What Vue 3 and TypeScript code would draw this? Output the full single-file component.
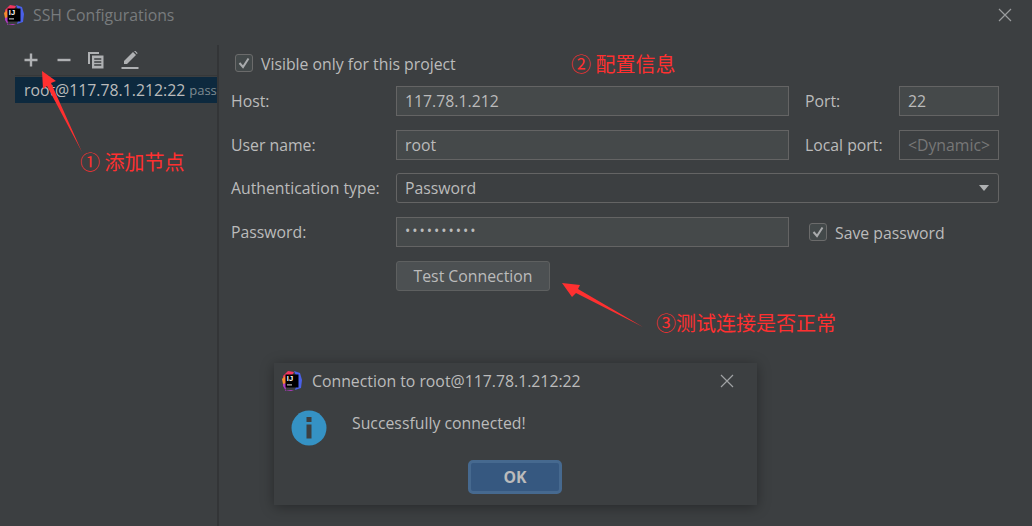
<template>
  <div class="window">
    <header class="titlebar">
      <svg class="logo" width="20" height="20" viewBox="0 0 20 20">
        <polygon points="1,5 6,0 12,1 8,8 2,14" fill="#f0365f" />
        <polygon points="12,0 18,2 20,9 19,17 13,19 16,9" fill="#4a60e8" />
        <polygon points="1,8 5,14 3,20 9,19 12,20 4,20 1,15" fill="#b03bc0" />
        <polygon points="0,8 3,5 4,12 1,13" fill="#f58b2e" />
        <rect x="3.5" y="3.5" width="13" height="13" fill="#000" />
        <text x="4.8" y="10.4" class="logo-text">IJ</text>
        <rect x="5" y="13.4" width="5" height="1" fill="#ddd" />
      </svg>
      <span class="title">SSH Configurations</span>
      <svg class="close" width="14" height="14" viewBox="0 0 14 14">
        <path d="M1 1 L13 13 M13 1 L1 13" stroke="#9a9c9e" stroke-width="1.2" fill="none" />
      </svg>
    </header>

    <main class="content">
      <aside class="sidebar">
        <div class="toolbar">
          <svg width="16" height="16" viewBox="0 0 16 16">
            <path d="M8 1.5 V14.5 M1.5 8 H14.5" stroke="#afb1b3" stroke-width="2.4" />
          </svg>
          <svg width="16" height="16" viewBox="0 0 16 16">
            <path d="M1.5 8 H14.5" stroke="#afb1b3" stroke-width="2.4" />
          </svg>
          <svg width="16" height="17" viewBox="0 0 16 17">
            <path d="M0 0 H11 V2 H2 V12 H0 Z" fill="#afb1b3" />
            <path d="M4 3.5 H15.5 V16.5 H4 Z" fill="#afb1b3" />
            <path d="M6.2 7 H13.3 M6.2 10 H13.3 M6.2 13 H13.3" stroke="#3c3f41" stroke-width="1.3" />
          </svg>
          <svg width="19" height="19" viewBox="0 0 19 19">
            <path d="M3 13 L3 10 L12 1 L15 4 L6 13 Z" fill="#afb1b3" />
            <path d="M13 0 L14.5 0 L16.5 2 L16 3.2 Z" fill="#afb1b3" />
            <rect x="0.5" y="16" width="17" height="2" fill="#afb1b3" />
          </svg>
        </div>
        <div class="node">
          <span class="node-name">root@117.78.1.212:22</span>
          <span class="node-auth">pass</span>
        </div>
      </aside>

      <section class="form">
        <label class="check visible-only">
          <span class="box">
            <svg width="14" height="14" viewBox="0 0 14 14">
              <path d="M2.5 7 L6 11 L11.5 2.5" stroke="#a9abad" stroke-width="2" fill="none" />
            </svg>
          </span>
          Visible only for this project
        </label>

        <div class="grid">
          <span class="label">Host:</span>
          <div class="input">117.78.1.212</div>
          <span class="label side">Port:</span>
          <div class="input">22</div>

          <span class="label">User name:</span>
          <div class="input">root</div>
          <span class="label side">Local port:</span>
          <div class="input disabled">&lt;Dynamic&gt;</div>

          <span class="label">Authentication type:</span>
          <div class="select">
            Password
            <svg width="10" height="6" viewBox="0 0 10 6"><polygon points="0,0 10,0 5,6" fill="#afb1b3" /></svg>
          </div>

          <span class="label">Password:</span>
          <div class="input dots">••••••••••</div>
          <label class="check save">
            <span class="box">
              <svg width="14" height="14" viewBox="0 0 14 14">
                <path d="M2.5 7 L6 11 L11.5 2.5" stroke="#a9abad" stroke-width="2" fill="none" />
              </svg>
            </span>
            Save password
          </label>

          <span></span>
          <button class="test">Test Connection</button>
        </div>
      </section>
    </main>

    <div class="dialog">
      <div class="dialog-title">
        <svg class="logo" width="20" height="20" viewBox="0 0 20 20">
          <polygon points="1,5 6,0 12,1 8,8 2,14" fill="#f0365f" />
          <polygon points="12,0 18,2 20,9 19,17 13,19 16,9" fill="#4a60e8" />
          <polygon points="1,8 5,14 3,20 9,19 12,20 4,20 1,15" fill="#b03bc0" />
          <polygon points="0,8 3,5 4,12 1,13" fill="#f58b2e" />
          <rect x="3.5" y="3.5" width="13" height="13" fill="#000" />
          <text x="4.8" y="10.4" class="logo-text">IJ</text>
          <rect x="5" y="13.4" width="5" height="1" fill="#ddd" />
        </svg>
        <span>Connection to root@117.78.1.212:22</span>
        <svg class="dialog-close" width="14" height="14" viewBox="0 0 14 14">
          <path d="M1 1 L13 13 M13 1 L1 13" stroke="#a0a2a4" stroke-width="1.2" fill="none" />
        </svg>
      </div>
      <div class="dialog-body">
        <svg width="36" height="36" viewBox="0 0 36 36">
          <circle cx="18" cy="18" r="17.5" fill="#3592c4" />
          <rect x="15.5" y="7" width="5" height="5" fill="#3c3f41" />
          <rect x="15.5" y="14.5" width="5" height="14" fill="#3c3f41" />
        </svg>
        <p>Successfully connected!</p>
      </div>
      <div class="dialog-actions">
        <button class="ok">OK</button>
      </div>
    </div>

    <svg class="arrows" width="1032" height="526" viewBox="0 0 1032 526">
      <polygon points="42,71 56,81 51,83 82,152 47,86 43,89" fill="#ff3030" />
      <polygon points="562,283 580,285 578,289 643,327 576,293 572,297" fill="#ff3030" />
    </svg>
    <span class="note note-one">① 添加节点</span>
    <span class="note note-two">② 配置信息</span>
    <span class="note note-three">③测试连接是否正常</span>
  </div>
</template>

<script setup lang="ts">
</script>

<style>
html,
body {
  margin: 0;
  background: #3c3f41;
}
</style>

<style scoped>
.window {
  position: relative;
  width: 1032px;
  height: 526px;
  overflow: hidden;
  background: #3c3f41;
  color: #bbbbbb;
  font-family: "Open Sans", "Noto Sans", sans-serif;
  font-size: 15.8px;
}

.titlebar {
  display: flex;
  align-items: center;
  height: 30px;
  padding-left: 4px;
}

.logo {
  flex: none;
}

.logo-text {
  font-family: "Liberation Sans", sans-serif;
  font-size: 7.5px;
  font-weight: 700;
  fill: #fff;
}

.title {
  margin-left: 9px;
  color: #787b7d;
}

.close {
  margin-left: auto;
  margin-right: 20px;
}

.content {
  display: flex;
  height: 496px;
  padding-top: 15px;
  box-sizing: border-box;
}

.sidebar {
  flex: none;
  width: 219px;
  padding-left: 15px;
  box-sizing: border-box;
  border-right: 2px solid #333537;
}

.toolbar {
  display: flex;
  align-items: center;
  gap: 16.5px;
  height: 30px;
  padding-left: 8px;
  border-bottom: 1px solid #363839;
}

.node {
  display: flex;
  align-items: center;
  height: 26px;
  margin-top: 1px;
  padding-left: 9px;
  background: #0d293e;
  overflow: hidden;
  white-space: nowrap;
}

.node-auth {
  margin-left: 4px;
  color: #7f8b91;
  font-size: 13px;
}

.form {
  flex: 1;
  padding: 3px 0 0 12px;
}

.check {
  display: flex;
  align-items: center;
  gap: 8px;
  box-sizing: border-box;
  padding-top: 2px;
}

.visible-only {
  height: 30px;
  margin-left: 4px;
  margin-bottom: 8px;
}

.box {
  display: flex;
  align-items: center;
  justify-content: center;
  width: 16px;
  height: 16px;
  margin-top: -2px;
  border: 1px solid #6b6b6b;
  border-radius: 3px;
  background: #43494a;
}

.grid {
  display: grid;
  grid-template-columns: 165px 393px 110px 100px;
  grid-auto-rows: 30px;
  row-gap: 13.7px;
  align-items: center;
}

.label {
  white-space: nowrap;
}

.side {
  padding-left: 16px;
}

.input,
.select {
  display: flex;
  align-items: center;
  box-sizing: border-box;
  height: 30px;
  padding-left: 8px;
  border: 1px solid #646464;
  white-space: nowrap;
}

.input {
  background: #45494a;
}

.input.disabled {
  justify-content: center;
  padding-left: 0;
  background: #3c3f41;
  color: #777777;
}

.input.dots {
  padding-bottom: 3px;
  font-size: 14px;
  letter-spacing: 2px;
}

.select {
  grid-column: 2 / 5;
  justify-content: space-between;
  padding-right: 9px;
  border-radius: 3px;
  background: #3c3f41;
}

.save {
  grid-column: 3 / 5;
  margin-left: 20px;
}

.test {
  width: 154px;
  height: 30px;
  padding: 0;
  border: 1px solid #5e6060;
  border-radius: 3px;
  background: #4c5052;
  color: #bbbbbb;
  font: inherit;
}

.dialog {
  position: absolute;
  left: 274px;
  top: 363px;
  width: 483px;
  height: 142px;
  background: #3c3f41;
  box-shadow: 0 2px 12px rgba(0, 0, 0, 0.35);
}

.dialog-title {
  display: flex;
  align-items: center;
  gap: 10px;
  height: 36px;
  padding-left: 8px;
}

.dialog-close {
  margin-left: auto;
  margin-right: 23px;
}

.dialog-body {
  display: flex;
  align-items: flex-start;
  padding: 11px 0 0 17px;
}

.dialog-body p {
  margin: 0 0 0 25px;
  line-height: 26px;
}

.dialog-actions {
  display: flex;
  justify-content: flex-end;
  padding: 14px 195px 0 0;
}

.ok {
  width: 94px;
  height: 34px;
  padding: 0;
  border: 3px solid #46698f;
  border-radius: 5px;
  background: #365880;
  color: #bbbbbb;
  font: inherit;
  font-weight: 700;
}

.arrows {
  position: absolute;
  left: 0;
  top: 0;
  pointer-events: none;
}

.note {
  position: absolute;
  color: #ff3030;
  font-family: "Noto Sans CJK SC", sans-serif;
  font-size: 20px;
  line-height: 26px;
  white-space: nowrap;
}

.note-one {
  left: 80px;
  top: 149px;
}

.note-two {
  left: 571px;
  top: 51px;
}

.note-three {
  left: 656px;
  top: 310px;
}
</style>
